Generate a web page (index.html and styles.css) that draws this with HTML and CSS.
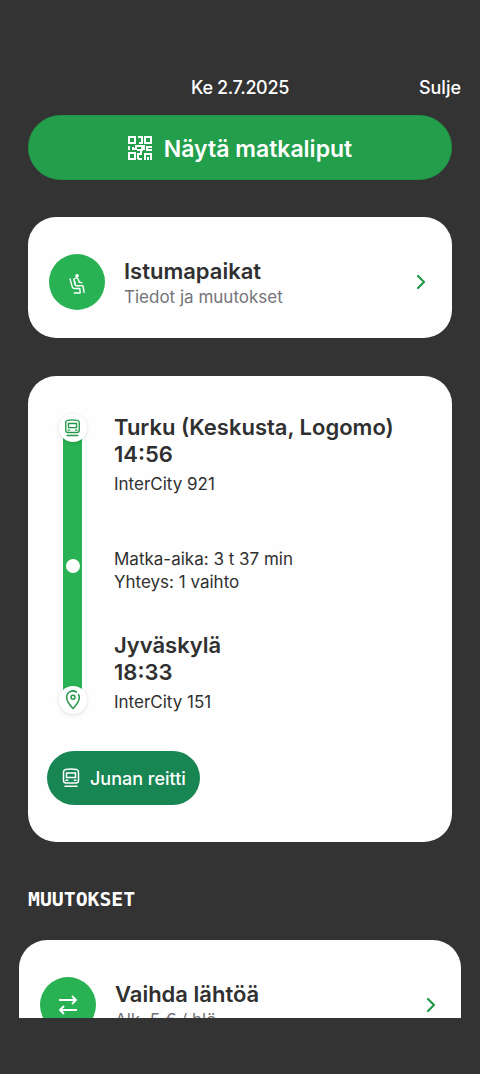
FILE: index.html
```html
<!DOCTYPE html>
<html lang="fi">
<head>
<meta charset="utf-8">
<title>Matka</title>
<link rel="stylesheet" href="styles.css">
</head>
<body>
<main class="screen">
  <header class="topbar">
    <span class="date">Ke 2.7.2025</span>
    <span class="close">Sulje</span>
  </header>
  <div class="tickets">
    <svg class="qr" viewBox="0 0 24 24" fill="none" stroke="currentColor" stroke-width="2">
      <path d="M1 1h6v6H1zM17 1h6v6h-6zM1 17h6v6H1zM10 1h4v6h-3M1 10v4M4 13h4v-3h5M5 11v2M9 14h5v-4h2v4M10 23v-5h3v-3M14 23h-4M24 11h-5v3h5M17 24v-6h6v6M20 21v3"/>
    </svg>
    <span class="tickets-label">Näytä matkaliput</span>
  </div>
  <section class="card seats">
    <div class="disc">
      <svg class="seat-icon" viewBox="0 0 18 22" fill="none" stroke="currentColor" stroke-width="1.5" stroke-linejoin="round">
        <circle cx="8.5" cy="2.4" r="1.9" fill="currentColor" stroke="none"/>
        <path d="M1 5l2.4 9q.4 1.7 2.2 1.7h5.7l.7 5.3M5 20.5h7M12.5 12.7h2.2l1.4 7.8M5 5.5l1.4 6q.3 1.3 1.7 1.3h4.4M5 6q3-3 4.7 0l1.2 3.2 3.1.5M6 8l.8 3"/>
      </svg>
    </div>
    <div class="copy">
      <h2 class="title istuma">Istumapaikat</h2>
      <p class="sub tiedot">Tiedot ja muutokset</p>
    </div>
    <svg class="chevron" viewBox="0 0 10 16"><path d="M2 2l6 6-6 6"/></svg>
  </section>
  <section class="card trip">
    <div class="journey">
      <div class="rail">
        <span class="node"><svg class="train" viewBox="0 0 18 20"><path d="M3.5 1.5Q9 .3 14.500 1.500Q16.500 2 16.500 4v8.500q0 2.500-2.500 2.500H4q-2.500 0-2.500-2.500V4q0-2 2-2.500zM4.500 5h9v4.500h-9zM4 12.300h1.800M12.200 12.300H14M3 18.300h12"/></svg></span>
        <span class="dot"></span>
        <span class="node"><svg class="pin" viewBox="0 0 16 20"><path d="M11.500 2.100A6.200 6.200 0 0 0 1.700 7.300C1.700 11.500 5 15.500 8 18.500c3-3 6.300-7 6.300-11.200q0-1.500-.7-2.800"/><circle cx="8" cy="7.300" r="2"/></svg></span>
      </div>
      <div class="stops">
        <h2 class="title turku">Turku (Keskusta, Logomo)</h2>
        <p class="time dep">14:56</p>
        <p class="detail ic1">InterCity 921</p>
        <p class="detail dur">Matka-aika: 3 t 37 min</p>
        <p class="detail conn">Yhteys: 1 vaihto</p>
        <h2 class="title jkl">Jyväskylä</h2>
        <p class="time arr">18:33</p>
        <p class="detail ic2">InterCity 151</p>
      </div>
    </div>
    <div class="route">
      <svg class="train" viewBox="0 0 18 20"><path d="M3.500 1.500Q9 .3 14.500 1.500Q16.500 2 16.500 4v8.500q0 2.500-2.500 2.500H4q-2.500 0-2.500-2.500V4q0-2 2-2.500zM4.500 5h9v4.500h-9zM4 12.300h1.800M12.200 12.300H14M3 18.300h12"/></svg>
      <span class="route-label">Junan reitti</span>
    </div>
  </section>
  <h3 class="section">MUUTOKSET</h3>
  <section class="card change">
    <div class="disc">
      <svg class="swap" viewBox="0 0 20 20"><path d="M1 5h17M14 1l4 4-4 4M19 15H2M6 11l-4 4 4 4"/></svg>
    </div>
    <div class="copy">
      <h2 class="title vaihda">Vaihda lähtöä</h2>
      <p class="sub alk">Alk. 5 € / hlö</p>
    </div>
    <svg class="chevron" viewBox="0 0 10 16"><path d="M2 2l6 6-6 6"/></svg>
  </section>
</main>
</body>
</html>
```
FILE: styles.css
```css
* { box-sizing: border-box; }
html, body { height: 100%; }
body {
  margin: 0;
  background: #333;
  color: #303030;
  font-family: Inter, "Liberation Sans", sans-serif;
  overflow: hidden;
}
h2, h3, p { margin: 0; white-space: nowrap; }
svg { display: block; flex: none; }
span { white-space: nowrap; }

.screen { height: 1018px; padding-top: 76px; overflow: hidden; }
.topbar {
  display: grid;
  grid-template-columns: 1fr auto 1fr;
  height: 39px;
  padding: 0 19px;
  color: #fff;
  font-size: 18px;
  font-weight: 500;
  line-height: 24px;
}
.date { grid-column: 2; letter-spacing: -.35px; }
.close { justify-self: end; }

.tickets {
  display: flex;
  align-items: center;
  justify-content: center;
  gap: 12px;
  height: 65px;
  margin: 0 28px 37px;
  border: 1px solid #209548;
  border-radius: 33px;
  background: #239f4b;
  color: #fff;
  font-size: 23px;
  font-weight: 600;
}
.qr { width: 24px; height: 24px; }
.tickets-label { line-height: 30px; padding-top: 2px; }

.card { margin: 0 28px; border-radius: 28px; background: #fefefe; }
.seats, .change { display: flex; align-items: flex-start; }
.seats { height: 121px; padding: 37px 26px 0 21px; margin-bottom: 38px; }
.disc {
  display: flex;
  flex: none;
  align-items: center;
  justify-content: center;
  width: 56px;
  height: 56px;
  border-radius: 50%;
  background: #28b253;
  color: #fff;
}
.seat-icon { width: 17px; height: 22px; margin-top: 4px; }
.copy { flex: 1; padding: 4px 0 0 19px; }
.title, .time { font-size: 22px; font-weight: 600; line-height: 27px; }
.sub { color: #74747a; font-size: 17px; line-height: 24px; }
.chevron { width: 10px; height: 16px; margin-top: 20px; }
.chevron path { fill: none; stroke: #249849; stroke-width: 2.2; stroke-linecap: round; stroke-linejoin: round; }

.trip { height: 466px; padding: 38px 19px 0; }
.journey { display: flex; height: 337px; }
.rail {
  display: flex;
  flex: none;
  flex-direction: column;
  align-items: center;
  justify-content: space-between;
  width: 19px;
  height: 300px;
  margin-left: 16px;
  background: linear-gradient(#28b253, #28b253) center / 19px 272px no-repeat;
}
.node {
  display: flex;
  flex: none;
  align-items: center;
  justify-content: center;
  width: 28px;
  height: 28px;
  border-radius: 50%;
  background: #fff;
  box-shadow: 0 1px 4px rgba(0, 0, 0, .13);
}
.dot { width: 14px; height: 14px; margin-bottom: -3px; border-radius: 50%; background: #fff; }
.train, .pin { fill: none; stroke: currentColor; stroke-width: 1.5; stroke-linecap: round; }
.node .train { width: 17px; height: 18px; color: #249849; }
.pin { width: 16px; height: 20px; color: #249849; }
.stops { padding-left: 32px; }
.detail { font-size: 17px; line-height: 23px; }
.ic1 { margin: 5px 0 52px; }
.conn { margin-bottom: 38px; }
.ic2 { margin-top: 5px; }
.route {
  display: flex;
  align-items: center;
  gap: 10px;
  width: 153px;
  height: 54px;
  padding-left: 15px;
  border-radius: 27px;
  background: #188653;
  color: #fff;
  font-size: 18px;
  font-weight: 500;
}
.route .train { width: 18px; height: 20px; }

.section {
  margin: 46px 28px 28px;
  color: #fff;
  font: bold 19.8px/24px "DejaVu Sans Mono", monospace;
}
.change { height: 121px; margin: 0 19px; padding: 37px 25px 0 21px; }
.swap { width: 20px; height: 20px; fill: none; stroke: currentColor; stroke-width: 1.9; }
```
